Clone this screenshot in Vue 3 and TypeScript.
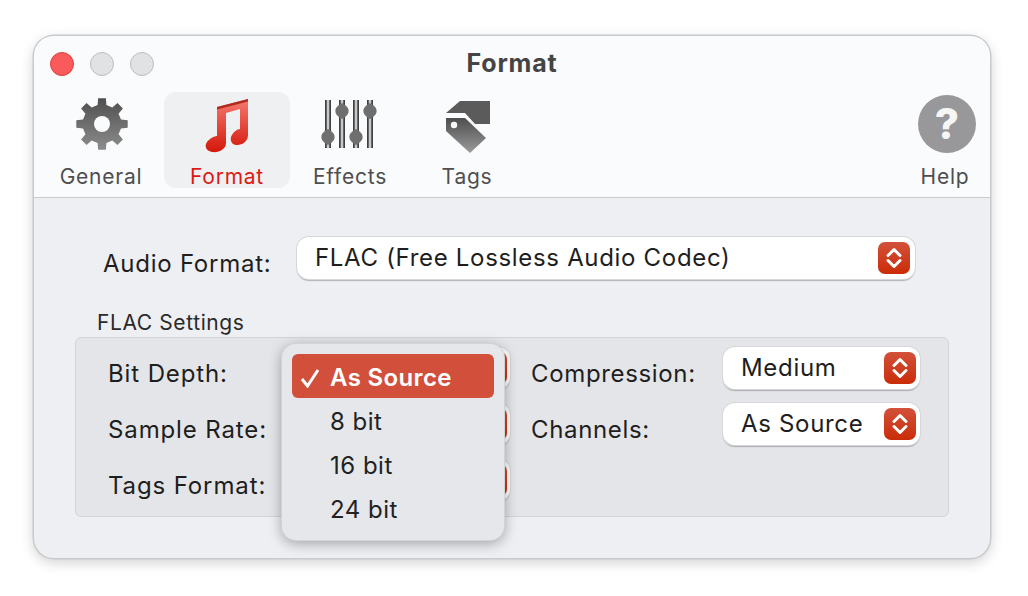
<script setup lang="ts">
const gearPath = (() => {
  const pts: string[] = [];
  const cx = 26, cy = 26, teeth = 8;
  for (let i = 0; i < teeth; i++) {
    const a = (i * Math.PI * 2) / teeth - Math.PI / 2;
    const step = Math.PI * 2 / teeth;
    const seq: [number, number][] = [
      [19.5, a - step * 0.29],
      [26, a - step * 0.19],
      [26, a + step * 0.19],
      [19.5, a + step * 0.29],
    ];
    for (const [r, t] of seq) {
      pts.push(`${(cx + r * Math.cos(t)).toFixed(2)} ${(cy + r * Math.sin(t)).toFixed(2)}`);
    }
  }
  return 'M' + pts.join('L') + 'Z';
})();

const sliders = [
  { x: 7, y: 37 },
  { x: 21, y: 11 },
  { x: 35, y: 37 },
  { x: 49, y: 11 },
];
const menu = ['8 bit', '16 bit', '24 bit'];
const leftLabels = ['Bit Depth:', 'Sample Rate:', 'Tags Format:'];
const rightRows = [
  { label: 'Compression:', value: 'Medium' },
  { label: 'Channels:', value: 'As Source' },
];
const chevrons = 'M3 9.5 L9 3.5 L15 9.5 M3 14.5 L9 20.5 L15 14.5';
</script>

<template>
  <div class="page">
    <div class="window">
      <header class="header">
        <div class="titlebar">
          <div class="lights">
            <span class="light red"></span>
            <span class="light"></span>
            <span class="light"></span>
          </div>
          <div class="title">Format</div>
        </div>
        <nav class="toolbar">
          <div class="tool general">
            <svg width="52" height="52" viewBox="0 0 52 52" class="ico">
              <defs>
                <linearGradient id="gearG" x1="0" y1="0" x2="0" y2="1">
                  <stop offset="0" stop-color="#4f4f4f" />
                  <stop offset="1" stop-color="#8c8c8c" />
                </linearGradient>
              </defs>
              <path :d="gearPath" fill="url(#gearG)" />
              <circle cx="26" cy="26" r="8" fill="#fafbfd" />
            </svg>
            <span>General</span>
          </div>
          <div class="tool format active">
            <svg width="44" height="54" viewBox="0 0 44 54" class="ico">
              <defs>
                <linearGradient id="noteG" x1="0" y1="0" x2="0" y2="1">
                  <stop offset="0" stop-color="#f47a70" />
                  <stop offset="1" stop-color="#d4180a" />
                </linearGradient>
              </defs>
              <path
                d="M12 8 L43 0 V36 C43 42 38 46 32 46 C27 46 25 42 26 38 C28 33 32 30 35 30 V10 L21 14 V44 C21 50 14 54 7 53 C1 52 -1 47 2 43 C5 39 10 37 12 37 Z"
                fill="url(#noteG)"
              />
              <path d="M12 8 L43 0 V2.5 L12 10.5 Z" fill="#b02a1e" />
            </svg>
            <span>Format</span>
          </div>
          <div class="tool effects">
            <svg width="56" height="50" viewBox="0 0 56 50" class="ico">
              <g v-for="s in sliders" :key="s.x">
                <rect :x="s.x - 3" y="0" width="6" height="48" fill="#c8c8c8" />
                <rect :x="s.x - 3" y="0" width="1.7" height="48" fill="#3f3f3f" />
                <rect :x="s.x + 1.3" y="0" width="1.7" height="48" fill="#3f3f3f" />
                <path
                  :d="`M${s.x} ${s.y - 8} C${s.x + 3} ${s.y - 6} ${s.x + 6.6} ${s.y - 4} ${s.x + 6.6} ${s.y} C${s.x + 6.6} ${s.y + 4} ${s.x + 3} ${s.y + 6} ${s.x} ${s.y + 8} C${s.x - 3} ${s.y + 6} ${s.x - 6.6} ${s.y + 4} ${s.x - 6.6} ${s.y} C${s.x - 6.6} ${s.y - 4} ${s.x - 3} ${s.y - 6} ${s.x} ${s.y - 8}Z`"
                  fill="#6f6f6f"
                />
              </g>
            </svg>
            <span>Effects</span>
          </div>
          <div class="tool tags">
            <svg width="46" height="54" viewBox="0 0 46 54" class="ico">
              <defs>
                <linearGradient id="tagG" x1="0" y1="0" x2="0" y2="1">
                  <stop offset="0" stop-color="#4e4e4e" />
                  <stop offset="1" stop-color="#9a9a9a" />
                </linearGradient>
              </defs>
              <path d="M1 13 L15 1 H45 V24 H30 L20 13 Z" fill="#5b5b5b" />
              <path d="M1 18 H20 L41 38 L25 53 L1 31 Z" fill="url(#tagG)" />
              <circle cx="9" cy="25" r="3.2" fill="#fafbfd" />
            </svg>
            <span>Tags</span>
          </div>
          <div class="tool help">
            <div class="help-ico">?</div>
            <span>Help</span>
          </div>
        </nav>
      </header>

      <main class="body">
        <div class="audio-row">
          <label class="audio-label">Audio Format:</label>
          <div class="select wide">
            <span class="value">FLAC (Free Lossless Audio Codec)</span>
            <span class="stepper">
              <svg width="18" height="24" viewBox="0 0 18 24"><path :d="chevrons" fill="none" stroke="#fff" stroke-width="3" stroke-linecap="round" stroke-linejoin="round" /></svg>
            </span>
          </div>
        </div>

        <div class="group-title">FLAC Settings</div>
        <section class="group">
          <div class="col left">
            <div v-for="l in leftLabels" :key="l" class="row">
              <span class="row-label">{{ l }}</span>
              <div class="select small hidden-sel">
                <span></span>
                <span class="stepper">
                  <svg width="18" height="24" viewBox="0 0 18 24"><path :d="chevrons" fill="none" stroke="#fff" stroke-width="3" stroke-linecap="round" stroke-linejoin="round" /></svg>
                </span>
              </div>
            </div>
          </div>
          <div class="col right">
            <div v-for="r in rightRows" :key="r.label" class="row">
              <span class="row-label">{{ r.label }}</span>
              <div class="select small side-sel">
                <span class="value">{{ r.value }}</span>
                <span class="stepper">
                  <svg width="18" height="24" viewBox="0 0 18 24"><path :d="chevrons" fill="none" stroke="#fff" stroke-width="3" stroke-linecap="round" stroke-linejoin="round" /></svg>
                </span>
              </div>
            </div>
          </div>
        </section>
      </main>

      <div class="popup">
        <div class="item selected">
          <svg class="check" width="22" height="22" viewBox="0 0 22 22"><path d="M3 13 L8.5 20 L19 4" fill="none" stroke="#fff" stroke-width="3" stroke-linejoin="miter" /></svg>
          As Source
        </div>
        <div v-for="m in menu" :key="m" class="item">{{ m }}</div>
      </div>
    </div>
  </div>
</template>

<style>
html, body { margin: 0; background: #fff; }
</style>

<style scoped>
.page {
  width: 1028px;
  height: 596px;
  overflow: hidden;
  padding: 36px 38px 38px 34px;
  box-sizing: border-box;
  background: #fff;
  font-family: Inter, "Liberation Sans", sans-serif;
  color: #1e1e1e;
}
.window {
  position: relative;
  width: 956px;
  height: 522px;
  border-radius: 20px;
  background: #eeeff2;
  box-shadow: 0 0 0 1.5px #c9cacc, 0 4px 14px rgba(0, 0, 0, 0.2);
  display: flex;
  flex-direction: column;
}
.header {
  height: 162px;
  box-sizing: border-box;
  background: #fafbfd;
  border-bottom: 1px solid #c9cacc;
  border-radius: 20px 20px 0 0;
}
.titlebar {
  height: 56px;
  display: grid;
  grid-template-columns: 1fr auto 1fr;
  align-items: center;
  padding-left: 16px;
  padding-right: 108px;
  box-sizing: border-box;
}
.lights { display: flex; gap: 16px; }
.light {
  width: 24px;
  height: 24px;
  box-sizing: border-box;
  border-radius: 50%;
  background: #e1e2e3;
  border: 1px solid #bdbebf;
}
.light.red { background: #fb5a5c; border-color: #d9403f; }
.title {
  grid-column: 2;
  font-size: 25px;
  font-weight: 700;
  letter-spacing: 0.8px;
  line-height: 28px;
  padding-bottom: 2px;
  color: #444;
  position: relative;
  left: 46px;
}
.toolbar { display: flex; height: 96px; padding-left: 4px; }
.tool {
  display: flex;
  flex-direction: column;
  align-items: center;
  justify-content: flex-end;
  height: 96px;
  box-sizing: border-box;
  font-size: 21px;
  letter-spacing: 0.75px;
  line-height: 22px;
  color: #4e4e4e;
  position: relative;
}
.ico { position: absolute; left: 50%; transform: translateX(-50%); }
.general { width: 126px; }
.general .ico { top: 6px; margin-left: 1px; }
.format { width: 126px; }
.format .ico { top: 7px; }
.active { background: #eff0f2; border-radius: 12px; color: #dc1a12; }
.effects { width: 120px; }
.effects .ico { top: 8px; margin-left: -1px; }
.tags { width: 114px; }
.tags .ico { top: 8px; margin-left: 1px; }
.help { width: 90px; margin-left: auto; }
.help-ico {
  position: absolute;
  top: 3px;
  left: 18px;
  width: 58px;
  height: 58px;
  border-radius: 50%;
  background: #989799;
  color: #f6f6f6;
  font-size: 42px;
  font-weight: 800;
  line-height: 58px;
  text-align: center;
  letter-spacing: 0;
}
.body { flex: 1; padding: 39px 0 0 41px; box-sizing: border-box; }
.audio-row { display: flex; align-items: center; font-size: 24px; }
.audio-label {
  width: 222px;
  padding: 10px 0 0 28px;
  box-sizing: border-box;
  letter-spacing: 0.75px;
}
.select {
  display: flex;
  align-items: center;
  justify-content: space-between;
  height: 42px;
  box-sizing: border-box;
  background: #fff;
  border-radius: 12px;
  box-shadow: 0 0 0 1px #d6d7d9, 0 1.5px 1px rgba(0, 0, 0, 0.25);
  padding: 0 5px 0 18px;
  font-size: 24px;
  letter-spacing: 0.68px;
}
.value { padding-bottom: 2px; }
.wide { width: 618px; }
.stepper {
  width: 32px;
  height: 32px;
  border-radius: 7px;
  background: linear-gradient(#d2513a, #cb2c08);
  display: flex;
  align-items: center;
  justify-content: center;
  flex: none;
}
.group-title {
  margin: 31px 0 1px 22px;
  font-size: 21px;
  line-height: 26px;
  letter-spacing: 0.6px;
  color: #2a2a2a;
}
.group {
  width: 874px;
  height: 180px;
  box-sizing: border-box;
  background: #e4e5e8;
  border: 1px solid #d3d4d7;
  border-radius: 6px;
  padding: 9px 28px 0 32px;
  display: flex;
  justify-content: space-between;
}
.col { display: flex; flex-direction: column; gap: 14px; }
.left { width: 402px; }
.right { width: 389px; }
.row {
  height: 42px;
  display: flex;
  align-items: center;
  justify-content: space-between;
  font-size: 24px;
  letter-spacing: 0.65px;
}
.left .row { letter-spacing: 0.88px; }
.row-label { padding-top: 10px; }
.side-sel { width: 197px; padding-right: 4px; }
.hidden-sel { width: 220px; padding-right: 3px; }
.popup {
  position: absolute;
  left: 248px;
  top: 308px;
  width: 222px;
  height: 196px;
  box-sizing: border-box;
  padding: 10px;
  border-radius: 14px;
  background: #e6e7ea;
  box-shadow: 0 0 0 1px #d2d3d5, 0 3px 14px rgba(0, 0, 0, 0.35);
}
.item {
  height: 44px;
  line-height: 48px;
  padding-left: 38px;
  font-size: 24px;
  letter-spacing: 0.5px;
  color: #222;
  position: relative;
}
.selected {
  background: #d24f3b;
  border-radius: 6px;
  color: #fff;
  font-weight: 600;
  letter-spacing: 0.35px;
}
.check {
  position: absolute;
  left: 7px;
  top: 12px;
}
</style>
